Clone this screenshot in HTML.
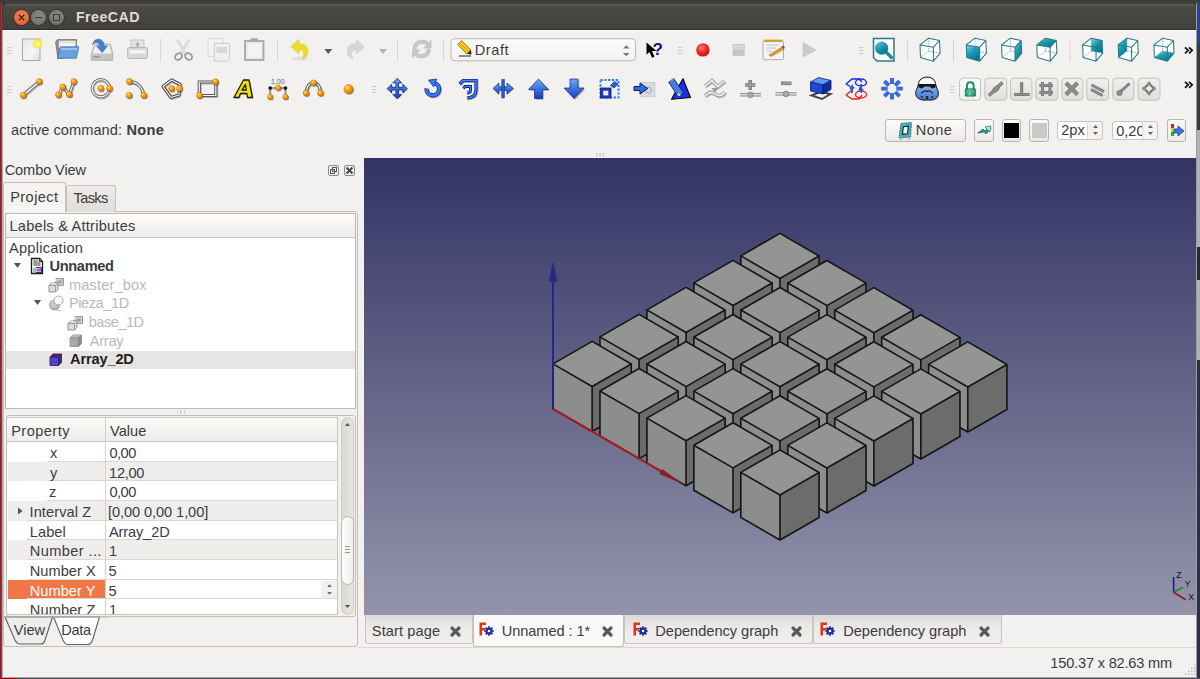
<!DOCTYPE html>
<html><head><meta charset="utf-8"><style>
*{box-sizing:border-box}
html,body{margin:0;padding:0;width:1200px;height:679px;overflow:hidden;background:#2f2e2b;font-family:"Liberation Sans",sans-serif;}
.a{position:absolute}
.t{position:absolute;white-space:nowrap;font-size:14px;color:#3c3c3c;line-height:1}
.sep{position:absolute;width:1px;background:#d6d3cf}
.grip{position:absolute;width:5px;height:8px;border-top:1px solid #c8c5c0;border-bottom:1px solid #c8c5c0}
.grip:after{content:"";position:absolute;left:0;top:3px;width:5px;height:1px;background:#c8c5c0}
.btn{position:absolute;border:1px solid #b9b5ae;border-radius:3px;background:linear-gradient(#fbfbfa,#ebe9e6)}
.sbtn{position:absolute;border:1px solid #c3bfb8;border-radius:4px;background:linear-gradient(#ecebe9,#dedcd8)}
</style></head>
<body>

<div class="a" style="left:0;top:0;width:1200px;height:4px;background:#3d3c38"></div>
<div class="a" style="left:0;top:3px;width:1px;height:676px;background:#6a2e45"></div>
<div class="a" style="left:1px;top:3px;width:1px;height:676px;background:#b03030"></div>
<div class="a" style="left:2px;top:3px;width:1px;height:27px;background:#3e3f3b"></div>
<div class="a" style="left:2px;top:30px;width:1px;height:648px;background:#b0afab"></div>
<div class="a" style="left:1196px;top:3px;width:1px;height:676px;background:#a09e9a"></div>
<div class="a" style="left:1197px;top:3px;width:3px;height:41px;background:#2a4590"></div>
<div class="a" style="left:1197px;top:44px;width:3px;height:86px;background:#3a3a3a"></div>
<div class="a" style="left:1197px;top:130px;width:3px;height:117px;background:#b0b0b0"></div>
<div class="a" style="left:1197px;top:247px;width:3px;height:33px;background:#2a2a2a"></div>
<div class="a" style="left:1197px;top:280px;width:3px;height:80px;background:#b0b0b0"></div>
<div class="a" style="left:1197px;top:360px;width:3px;height:319px;background:#2e2e4a"></div>
<div class="a" style="left:2px;top:677px;width:1194px;height:1px;background:#a8a6a2"></div>
<div class="a" style="left:2px;top:678px;width:1198px;height:1px;background:#4a4a58"></div>
<div class="a" style="left:1px;top:678px;width:16px;height:1px;background:#8a0a0a"></div>
<!-- title bar -->
<div class="a" style="left:3px;top:4px;width:1193px;height:26px;border-radius:4px 4px 0 0;background:linear-gradient(#5c5b56 0,#5c5b56 1px,#4b4a45 2px,#413f3b 100%)"></div>
<div class="a" style="left:3px;top:29px;width:1193px;height:1px;background:#2e2d2a"></div><div class="a" style="left:3px;top:30px;width:1193px;height:1px;background:#fbfbfa"></div>
<div class="a" style="left:14px;top:10px;width:15px;height:15px;border-radius:50%;background:radial-gradient(circle at 50% 35%,#f5825b,#e2571f);box-shadow:0 0 0 1px rgba(0,0,0,0.22)"></div>
<div class="a" style="left:31px;top:10px;width:15px;height:15px;border-radius:50%;background:radial-gradient(circle at 50% 35%,#8a8984,#6b6a65);box-shadow:0 0 0 1px rgba(0,0,0,0.22)"></div>
<div class="a" style="left:49px;top:10px;width:15px;height:15px;border-radius:50%;background:radial-gradient(circle at 50% 35%,#8a8984,#6b6a65);box-shadow:0 0 0 1px rgba(0,0,0,0.22)"></div>
<svg class="a" style="left:14px;top:10px" width="15" height="15"><path d="M4.8 4.8L10.2 10.2M10.2 4.8L4.8 10.2" stroke="#3c2418" stroke-width="1.3"/></svg>
<div class="a" style="left:35.2px;top:16.8px;width:6.6px;height:1.5px;background:#3a3935"></div>
<div class="a" style="left:53.3px;top:14.3px;width:6.5px;height:6.5px;border:1.2px solid #3a3935"></div>
<!-- window body -->
<div class="a" style="left:3px;top:31px;width:1193px;height:646px;background:#f2f1f0"></div>

<div class="t" style="left:76.00px;top:10.28px;font-size:14.2px;font-weight:700;color:#dfdbd2;letter-spacing:0.458px;">FreeCAD</div>
<svg class="a" style="left:0;top:0" width="1200" height="110" viewBox="0 0 1200 110"><defs>
<radialGradient id="gor" cx="0.35" cy="0.3" r="0.7"><stop offset="0" stop-color="#ffe08a"/><stop offset="0.45" stop-color="#fba40f"/><stop offset="1" stop-color="#e07800"/></radialGradient>
<linearGradient id="gteal" x1="0" y1="0" x2="0.6" y2="1"><stop offset="0" stop-color="#7fd3ee"/><stop offset="0.5" stop-color="#1e9ab4"/><stop offset="1" stop-color="#00798c"/></linearGradient>
<linearGradient id="gblue" x1="0" y1="0" x2="0" y2="1"><stop offset="0" stop-color="#6aa8f4"/><stop offset="1" stop-color="#1340c0"/></linearGradient>
<linearGradient id="gbtn" x1="0" y1="0" x2="0" y2="1"><stop offset="0" stop-color="#f1f0ee"/><stop offset="1" stop-color="#e0deda"/></linearGradient>
<linearGradient id="gbtnl" x1="0" y1="0" x2="0" y2="1"><stop offset="0" stop-color="#fdfdfd"/><stop offset="1" stop-color="#f2f1f0"/></linearGradient>
<linearGradient id="gpage" x1="0" y1="0" x2="1" y2="1"><stop offset="0" stop-color="#e6e6e6"/><stop offset="0.6" stop-color="#f6f6f6"/><stop offset="1" stop-color="#dcdcdc"/></linearGradient>
<radialGradient id="gred" cx="0.4" cy="0.35" r="0.7"><stop offset="0" stop-color="#ff7a7a"/><stop offset="0.5" stop-color="#ee2a2a"/><stop offset="1" stop-color="#c81010"/></radialGradient>
<radialGradient id="gglow" cx="0.5" cy="0.5" r="0.5"><stop offset="0" stop-color="#ffffd0"/><stop offset="0.5" stop-color="#f8f020"/><stop offset="1" stop-color="#f0e040" stop-opacity="0"/></radialGradient>
<linearGradient id="ggreen" x1="0" y1="0" x2="1" y2="0"><stop offset="0" stop-color="#0e7a5a"/><stop offset="0.4" stop-color="#5ac8a0"/><stop offset="1" stop-color="#0e7a5a"/></linearGradient>
</defs><path d="M7 47.5H11.5M7 50.5H11.5M7 53.5H11.5" stroke="#cfccc7" stroke-width="1"/><rect x="22.5" y="39" width="17.5" height="21.5" fill="url(#gpage)" stroke="#a8a8a8" stroke-width="1"/><circle cx="37.7" cy="43.9" r="6" fill="url(#gglow)"/><path d="M55.5 42L57.5 39.5H76.5V56.5L58 58.5Z" fill="#8e8e8e" stroke="#6a6a6a" stroke-width="0.7"/><path d="M59 40.8H75.5V48H59Z" fill="#f6f6f6" stroke="#bbb" stroke-width="0.5"/><path d="M60 42.5H74.5" stroke="#d0d0d0" stroke-width="0.8"/><path d="M60.5 46.8H78.8L76.3 58.2H57.3Z" fill="#6aa2e0" stroke="#3d70b5" stroke-width="0.8"/><path d="M61.5 48H77.3L76.8 50H60.5Z" fill="#9cc4f0"/><path d="M95 44H110.3L112.7 53.7V60.3H91.3V53.7Z" fill="#c6c6c6" stroke="#a4a4a4" stroke-width="0.8"/><path d="M95.6 44.8H109.7L111.6 53.5H92.4Z" fill="#f0f0f0"/><rect x="93.5" y="56" width="6" height="1.8" fill="#9a9a9a"/><path d="M92.3 45Q93.5 39 98.5 39Q103.5 39.5 104.5 45.7H107.8L102.2 52.7L96.2 45.7H99.5Q99 42.5 96.5 42.5Q94 42.5 92.3 45Z" fill="#4a7fc8" stroke="#3a6ab0" stroke-width="0.4"/><rect x="131" y="40" width="13" height="8" fill="#e4e4e4" stroke="#bdbdbd" stroke-width="0.8"/><path d="M137.5 42L135 45H140Z M136.6 45h1.8v2h-1.8z" fill="#a8a8a8"/><rect x="127.5" y="47.5" width="20" height="11" rx="2" fill="#d6d6d6" stroke="#b0b0b0" stroke-width="0.8"/><rect x="129.5" y="50" width="16" height="3.5" fill="#f4f4f4"/><line x1="160.5" y1="38.5" x2="160.5" y2="61.5" stroke="#d9d6d1" stroke-width="1"/><path d="M177 39.5L185 53M189.5 39.5L181 53" stroke="#c8c8c8" stroke-width="2.2"/><path d="M177 39.5L185 53M189.5 39.5L181 53" stroke="#e8e8e8" stroke-width="1"/><ellipse cx="178.6" cy="56.5" rx="3.8" ry="3" fill="none" stroke="#9a9a9a" stroke-width="1.7" transform="rotate(-35 178.6 56.5)"/><ellipse cx="188.6" cy="56.5" rx="3.8" ry="3" fill="none" stroke="#9a9a9a" stroke-width="1.7" transform="rotate(35 188.6 56.5)"/><rect x="208" y="38.7" width="15" height="17.5" fill="#f3f3f3" stroke="#cfcfcf" stroke-width="0.8"/><path d="M214.3 43.3H229.6V58.5L227 61.2H214.3Z" fill="#f0f0f0" stroke="#c4c4c4" stroke-width="0.8"/><rect x="216.5" y="47" width="10.5" height="6" fill="#d8d8d8"/><rect x="245" y="41" width="18.5" height="19" fill="#ececec" stroke="#a6a6a6" stroke-width="1.8"/><rect x="250.5" y="38.3" width="7.5" height="3.5" rx="1" fill="#a8a8a8"/><rect x="248" y="44" width="12.5" height="13" fill="#f4f4f4"/><line x1="277.5" y1="38.5" x2="277.5" y2="61.5" stroke="#d9d6d1" stroke-width="1"/><ellipse cx="300" cy="58.5" rx="8" ry="2" fill="#000" opacity="0.08"/><path d="M291 46.7L299 39.3V43.5Q308.5 44 308 52Q307.5 57 302.5 58.8Q304.5 55 303.5 52Q302 49.5 299 50V54Z" fill="#ecdc30" stroke="#d8c420" stroke-width="0.6"/><path d="M324.3 49L332.3 49L328.3 54Z" fill="#5a5a5a"/><path d="M364.3 46.7L356.3 39.3V43.5Q346.8 44 347.3 52Q347.8 57 352.8 58.8Q350.8 55 351.8 52Q353.3 49.5 356.3 50V54Z" fill="#d6d6d6" stroke="#c8c8c8" stroke-width="0.6"/><path d="M379 49L387 49L383 54Z" fill="#b0b0b0"/><line x1="397.5" y1="38.5" x2="397.5" y2="61.5" stroke="#d9d6d1" stroke-width="1"/><path d="M413 49Q413 40.5 422 40Q427 40 429.5 43L431 40V48H423.5L426.5 45.5Q425 43.5 422 43.6Q416.5 44 416.5 49Z" fill="#c8c8c8" stroke="#b8b8b8" stroke-width="0.6"/><path d="M430.5 49Q430.5 57.5 421.5 58Q416.5 58 414 55L412.5 58V50H420L417 52.5Q418.5 54.5 421.5 54.4Q427 54 427 49Z" fill="#c8c8c8" stroke="#b8b8b8" stroke-width="0.6"/><line x1="443.5" y1="38.5" x2="443.5" y2="61.5" stroke="#d9d6d1" stroke-width="1"/><rect x="451" y="38.8" width="184.5" height="22" rx="3.5" fill="url(#gbtnl)" stroke="#bcb8b1" stroke-width="1"/><path d="M457.5 44.5L461.5 40.5L471 50L467 54Z" fill="#f2c81a" stroke="#9a6a00" stroke-width="0.8"/><path d="M459.5 42.5L469 52" stroke="#d89a10" stroke-width="1"/><path d="M467 54L471 50L471.5 54.5Z" fill="#222"/><path d="M459 56H471" stroke="#222" stroke-width="1"/><path d="M623 48.5L626.3 45.3L629.6 48.5Z M623 53L626.3 56.3L629.6 53Z" fill="#777"/><path d="M646.5 42.5V54.5L649.5 52L652 57.8L654.5 56.8L652 51H656.5Z" fill="#000"/><text x="652.6" y="55" font-family="Liberation Sans" font-weight="bold" font-size="17" fill="#10108a">?</text><path d="M678 47.5H682.5M678 50.5H682.5M678 53.5H682.5" stroke="#cfccc7" stroke-width="1"/><circle cx="702.9" cy="49.9" r="6.7" fill="url(#gred)"/><rect x="733" y="44.3" width="11.2" height="11.1" fill="#c4c4c4" stroke="#bbb" stroke-width="0.6"/><rect x="733.5" y="44.8" width="10.2" height="5" fill="#d8d8d8"/><rect x="763" y="41" width="20.5" height="18.7" rx="1" fill="#f4f4f4" stroke="#9a9a9a" stroke-width="0.8"/><rect x="764" y="39.6" width="18.5" height="2.4" fill="#c8a040"/><path d="M766 45H779M766 48H776M766 51H772" stroke="#b8b8b8" stroke-width="0.8"/><path d="M769 55L782 47L784 49L771 56.5Z" fill="#e0a030" stroke="#8a5a10" stroke-width="0.5"/><path d="M781.5 46.5L783.5 45.5L785 48L783.5 49Z" fill="#d83030"/><path d="M803 42.7L816 50L803 57Z" fill="#cacaca" stroke="#bdbdbd" stroke-width="0.6"/><path d="M859 47.5H863.5M859 50.5H863.5M859 53.5H863.5" stroke="#cfccc7" stroke-width="1"/><path d="M873.5 38.5H894V61H877L873.5 57.5Z" fill="#fff" stroke="#2a7a84" stroke-width="1.5"/><path d="M886.5 52.5L891.5 57.5" stroke="#1c8a9a" stroke-width="3.2" stroke-linecap="round"/><circle cx="881.7" cy="48.2" r="6.2" fill="url(#gteal)" stroke="#1a6a78" stroke-width="0.6"/><line x1="907.5" y1="38.5" x2="907.5" y2="61.5" stroke="#d9d6d1" stroke-width="1"/><polygon points="920.0,44.9 928.7,38.2 939.5,40.5 940.1,53.1 933.4,61.2 920.5,57.5" fill="#fff"/><path d="M928.7,38.2 928.7,51.0M928.7,51.0 920.5,57.5M928.7,51.0 940.1,53.1" stroke="#3a8a96" stroke-width="0.7" stroke-dasharray="1.4,1.1" fill="none"/><path d="M920.0,44.9 928.7,38.2 939.5,40.5 933.4,47.2Z M920.0,44.9 920.5,57.5 933.4,61.2 940.1,53.1 939.5,40.5 M933.4,47.2 933.4,61.2" stroke="#2a7884" stroke-width="1.05" fill="none" stroke-linejoin="round"/><line x1="953.5" y1="38.5" x2="953.5" y2="61.5" stroke="#d9d6d1" stroke-width="1"/><polygon points="966.3,44.9 975.0,38.2 985.8,40.5 986.4,53.1 979.7,61.2 966.8,57.5" fill="#fff"/><polygon points="966.3,44.9 979.7,47.2 979.7,61.2 966.8,57.5" fill="url(#gteal)"/><path d="M975.0,38.2 975.0,51.0M975.0,51.0 966.8,57.5M975.0,51.0 986.4,53.1" stroke="#3a8a96" stroke-width="0.7" stroke-dasharray="1.4,1.1" fill="none"/><path d="M966.3,44.9 975.0,38.2 985.8,40.5 979.7,47.2Z M966.3,44.9 966.8,57.5 979.7,61.2 986.4,53.1 985.8,40.5 M979.7,47.2 979.7,61.2" stroke="#2a7884" stroke-width="1.05" fill="none" stroke-linejoin="round"/><polygon points="1001.6,44.9 1010.3,38.2 1021.1,40.5 1021.7,53.1 1015.0,61.2 1002.1,57.5" fill="#fff"/><polygon points="1015.0,47.2 1021.1,40.5 1021.7,53.1 1015.0,61.2" fill="url(#gteal)"/><path d="M1010.3,38.2 1010.3,51.0M1010.3,51.0 1002.1,57.5M1010.3,51.0 1021.7,53.1" stroke="#3a8a96" stroke-width="0.7" stroke-dasharray="1.4,1.1" fill="none"/><path d="M1001.6,44.9 1010.3,38.2 1021.1,40.5 1015.0,47.2Z M1001.6,44.9 1002.1,57.5 1015.0,61.2 1021.7,53.1 1021.1,40.5 M1015.0,47.2 1015.0,61.2" stroke="#2a7884" stroke-width="1.05" fill="none" stroke-linejoin="round"/><polygon points="1036.8,44.9 1045.5,38.2 1056.3,40.5 1056.9,53.1 1050.2,61.2 1037.3,57.5" fill="#fff"/><polygon points="1036.8,44.9 1045.5,38.2 1056.3,40.5 1050.2,47.2" fill="url(#gteal)"/><path d="M1045.5,38.2 1045.5,51.0M1045.5,51.0 1037.3,57.5M1045.5,51.0 1056.9,53.1" stroke="#3a8a96" stroke-width="0.7" stroke-dasharray="1.4,1.1" fill="none"/><path d="M1036.8,44.9 1045.5,38.2 1056.3,40.5 1050.2,47.2Z M1036.8,44.9 1037.3,57.5 1050.2,61.2 1056.9,53.1 1056.3,40.5 M1050.2,47.2 1050.2,61.2" stroke="#2a7884" stroke-width="1.05" fill="none" stroke-linejoin="round"/><line x1="1070" y1="38.5" x2="1070" y2="61.5" stroke="#d9d6d1" stroke-width="1"/><polygon points="1082.6,44.9 1091.3,38.2 1102.1,40.5 1102.7,53.1 1096.0,61.2 1083.1,57.5" fill="#fff"/><polygon points="1091.3,38.2 1102.1,40.5 1102.7,53.1 1091.3,51.0" fill="url(#gteal)"/><path d="M1091.3,38.2 1091.3,51.0M1091.3,51.0 1083.1,57.5M1091.3,51.0 1102.7,53.1" stroke="#3a8a96" stroke-width="0.7" stroke-dasharray="1.4,1.1" fill="none"/><path d="M1082.6,44.9 1091.3,38.2 1102.1,40.5 1096.0,47.2Z M1082.6,44.9 1083.1,57.5 1096.0,61.2 1102.7,53.1 1102.1,40.5 M1096.0,47.2 1096.0,61.2" stroke="#2a7884" stroke-width="1.05" fill="none" stroke-linejoin="round"/><polygon points="1118.2,44.9 1126.9,38.2 1137.7,40.5 1138.3,53.1 1131.6,61.2 1118.7,57.5" fill="#fff"/><polygon points="1118.2,44.9 1126.9,38.2 1126.9,51.0 1118.7,57.5" fill="url(#gteal)"/><path d="M1126.9,38.2 1126.9,51.0M1126.9,51.0 1118.7,57.5M1126.9,51.0 1138.3,53.1" stroke="#3a8a96" stroke-width="0.7" stroke-dasharray="1.4,1.1" fill="none"/><path d="M1118.2,44.9 1126.9,38.2 1137.7,40.5 1131.6,47.2Z M1118.2,44.9 1118.7,57.5 1131.6,61.2 1138.3,53.1 1137.7,40.5 M1131.6,47.2 1131.6,61.2" stroke="#2a7884" stroke-width="1.05" fill="none" stroke-linejoin="round"/><polygon points="1153.9,44.9 1162.6,38.2 1173.4,40.5 1174.0,53.1 1167.3,61.2 1154.4,57.5" fill="#fff"/><polygon points="1154.4,57.5 1162.6,51.0 1174.0,53.1 1167.3,61.2" fill="url(#gteal)"/><path d="M1162.6,38.2 1162.6,51.0M1162.6,51.0 1154.4,57.5M1162.6,51.0 1174.0,53.1" stroke="#3a8a96" stroke-width="0.7" stroke-dasharray="1.4,1.1" fill="none"/><path d="M1153.9,44.9 1162.6,38.2 1173.4,40.5 1167.3,47.2Z M1153.9,44.9 1154.4,57.5 1167.3,61.2 1174.0,53.1 1173.4,40.5 M1167.3,47.2 1167.3,61.2" stroke="#2a7884" stroke-width="1.05" fill="none" stroke-linejoin="round"/><path d="M1185 47.3L1188.2 50.3L1185 53.3M1189 47.3L1192.2 50.3L1189 53.3" fill="none" stroke="#111" stroke-width="1.7"/><path d="M7 86.5H11.5M7 89.5H11.5M7 92.5H11.5" stroke="#cfccc7" stroke-width="1"/><path d="M23.2 95.3L39.3 81.6" fill="none" stroke="#222" stroke-opacity="0.28" stroke-width="3.8" transform="translate(0.9,1)" /><path d="M23.2 95.3L39.3 81.6" fill="none" stroke="#707070" stroke-width="3.8" /><path d="M23.2 95.3L39.3 81.6" fill="none" stroke="#f6f6f6" stroke-width="1.6" /><circle cx="24.0" cy="96.2" r="3.0" fill="#333" opacity="0.55"/><circle cx="23.2" cy="95.3" r="3.0" fill="url(#gor)" stroke="#c07000" stroke-width="0.5"/><circle cx="40.099999999999994" cy="82.5" r="3.0" fill="#333" opacity="0.55"/><circle cx="39.3" cy="81.6" r="3.0" fill="url(#gor)" stroke="#c07000" stroke-width="0.5"/><path d="M58.4 94.75L62.8 86.9L69.3 94.4L73.9 81.6" fill="none" stroke="#222" stroke-opacity="0.28" stroke-width="3.2" transform="translate(0.9,1)" /><path d="M58.4 94.75L62.8 86.9L69.3 94.4L73.9 81.6" fill="none" stroke="#707070" stroke-width="3.2" /><path d="M58.4 94.75L62.8 86.9L69.3 94.4L73.9 81.6" fill="none" stroke="#f6f6f6" stroke-width="1.2" /><circle cx="59.199999999999996" cy="95.65" r="3.0" fill="#333" opacity="0.55"/><circle cx="58.4" cy="94.75" r="3.0" fill="url(#gor)" stroke="#c07000" stroke-width="0.5"/><circle cx="63.599999999999994" cy="87.80000000000001" r="3.0" fill="#333" opacity="0.55"/><circle cx="62.8" cy="86.9" r="3.0" fill="url(#gor)" stroke="#c07000" stroke-width="0.5"/><circle cx="70.1" cy="95.30000000000001" r="3.0" fill="#333" opacity="0.55"/><circle cx="69.3" cy="94.4" r="3.0" fill="url(#gor)" stroke="#c07000" stroke-width="0.5"/><circle cx="74.7" cy="82.5" r="3.0" fill="#333" opacity="0.55"/><circle cx="73.9" cy="81.6" r="3.0" fill="url(#gor)" stroke="#c07000" stroke-width="0.5"/><path d="M92.2 88.3A8.6 8.6 0 1 0 109.4 88.3A8.6 8.6 0 1 0 92.2 88.3Z" fill="none" stroke="#222" stroke-opacity="0.28" stroke-width="3.2" transform="translate(0.9,1)" /><path d="M92.2 88.3A8.6 8.6 0 1 0 109.4 88.3A8.6 8.6 0 1 0 92.2 88.3Z" fill="none" stroke="#707070" stroke-width="3.2" /><path d="M92.2 88.3A8.6 8.6 0 1 0 109.4 88.3A8.6 8.6 0 1 0 92.2 88.3Z" fill="none" stroke="#f6f6f6" stroke-width="1.3" /><circle cx="101.6" cy="89.2" r="3.0" fill="#333" opacity="0.55"/><circle cx="100.8" cy="88.3" r="3.0" fill="url(#gor)" stroke="#c07000" stroke-width="0.5"/><circle cx="110.39999999999999" cy="89.2" r="3.0" fill="#333" opacity="0.55"/><circle cx="109.6" cy="88.3" r="3.0" fill="url(#gor)" stroke="#c07000" stroke-width="0.5"/><path d="M129.4 81.6Q141 82 143.9 95.3" fill="none" stroke="#222" stroke-opacity="0.28" stroke-width="3.2" transform="translate(0.9,1)" /><path d="M129.4 81.6Q141 82 143.9 95.3" fill="none" stroke="#707070" stroke-width="3.2" /><path d="M129.4 81.6Q141 82 143.9 95.3" fill="none" stroke="#f6f6f6" stroke-width="1.2" /><circle cx="130.20000000000002" cy="82.5" r="3.0" fill="#333" opacity="0.55"/><circle cx="129.4" cy="81.6" r="3.0" fill="url(#gor)" stroke="#c07000" stroke-width="0.5"/><circle cx="129.9" cy="96.2" r="3.0" fill="#333" opacity="0.55"/><circle cx="129.1" cy="95.3" r="3.0" fill="url(#gor)" stroke="#c07000" stroke-width="0.5"/><circle cx="144.70000000000002" cy="96.2" r="3.0" fill="#333" opacity="0.55"/><circle cx="143.9" cy="95.3" r="3.0" fill="url(#gor)" stroke="#c07000" stroke-width="0.5"/><path d="M163 86.5L171.5 80L180 84.5L179 95L171 97.5Z" fill="none" stroke="#222" stroke-opacity="0.28" stroke-width="3.2" transform="translate(0.9,1)" stroke-linejoin="round"/><path d="M163 86.5L171.5 80L180 84.5L179 95L171 97.5Z" fill="none" stroke="#4a4a4a" stroke-width="3.2" stroke-linejoin="round"/><path d="M163 86.5L171.5 80L180 84.5L179 95L171 97.5Z" fill="none" stroke="#f6f6f6" stroke-width="1.2" stroke-linejoin="round"/><circle cx="172.4" cy="89.5" r="3.0" fill="#333" opacity="0.55"/><circle cx="171.6" cy="88.6" r="3.0" fill="url(#gor)" stroke="#c07000" stroke-width="0.5"/><circle cx="180.3" cy="89.5" r="3.0" fill="#333" opacity="0.55"/><circle cx="179.5" cy="88.6" r="3.0" fill="url(#gor)" stroke="#c07000" stroke-width="0.5"/><path d="M199.3 82H215.8V95.5H199.3Z" fill="none" stroke="#222" stroke-opacity="0.28" stroke-width="3.2" transform="translate(0.9,1)" /><path d="M199.3 82H215.8V95.5H199.3Z" fill="none" stroke="#5a5a5a" stroke-width="3.2" /><path d="M199.3 82H215.8V95.5H199.3Z" fill="none" stroke="#f6f6f6" stroke-width="1.2" /><circle cx="216.4" cy="82.7" r="3.0" fill="#333" opacity="0.55"/><circle cx="215.6" cy="81.8" r="3.0" fill="url(#gor)" stroke="#c07000" stroke-width="0.5"/><circle cx="200.3" cy="96.4" r="3.0" fill="#333" opacity="0.55"/><circle cx="199.5" cy="95.5" r="3.0" fill="url(#gor)" stroke="#c07000" stroke-width="0.5"/><path d="M234 97.5L243.5 80H249L252.5 97.5H247.5L246.8 93.5H240.5L238.8 97.5Z M242 90H246.3L245.4 84.5Z" fill="#333" fill-rule="evenodd" opacity="0.4" transform="translate(1,1)"/><path d="M234 97.5L243.5 80H249L252.5 97.5H247.5L246.8 93.5H240.5L238.8 97.5Z M242 90H246.3L245.4 84.5Z" fill="#f8e000" fill-rule="evenodd" stroke="#1a1a1a" stroke-width="1.3" stroke-linejoin="round"/><text x="271" y="84.3" font-family="Liberation Sans" font-size="7" fill="#bbb" stroke="#888" stroke-width="0.3">1.00</text><path d="M270.2 88.1H285.5M270.2 88.1V96.9M285.5 88.1V96.9" stroke="#999" stroke-width="2.2"/><circle cx="270.2" cy="88.1" r="1.8" fill="#111"/><circle cx="285.5" cy="88.1" r="1.8" fill="#111"/><circle cx="271.0" cy="97.80000000000001" r="2.7" fill="#333" opacity="0.55"/><circle cx="270.2" cy="96.9" r="2.7" fill="url(#gor)" stroke="#c07000" stroke-width="0.5"/><circle cx="286.3" cy="97.80000000000001" r="2.7" fill="#333" opacity="0.55"/><circle cx="285.5" cy="96.9" r="2.7" fill="url(#gor)" stroke="#c07000" stroke-width="0.5"/><circle cx="278.90000000000003" cy="88.7" r="2.7" fill="#333" opacity="0.55"/><circle cx="278.1" cy="87.8" r="2.7" fill="url(#gor)" stroke="#c07000" stroke-width="0.5"/><path d="M306.1 93Q307 82.9 313.5 82.9Q320 82.9 320.5 93" fill="none" stroke="#222" stroke-opacity="0.28" stroke-width="3.2" transform="translate(0.9,1)" /><path d="M306.1 93Q307 82.9 313.5 82.9Q320 82.9 320.5 93" fill="none" stroke="#5a5a5a" stroke-width="3.2" /><path d="M306.1 93Q307 82.9 313.5 82.9Q320 82.9 320.5 93" fill="none" stroke="#f6f6f6" stroke-width="1.2" /><circle cx="306.90000000000003" cy="93.9" r="3.0" fill="#333" opacity="0.55"/><circle cx="306.1" cy="93" r="3.0" fill="url(#gor)" stroke="#c07000" stroke-width="0.5"/><circle cx="314.3" cy="83.80000000000001" r="3.0" fill="#333" opacity="0.55"/><circle cx="313.5" cy="82.9" r="3.0" fill="url(#gor)" stroke="#c07000" stroke-width="0.5"/><circle cx="321.3" cy="93.9" r="3.0" fill="#333" opacity="0.55"/><circle cx="320.5" cy="93" r="3.0" fill="url(#gor)" stroke="#c07000" stroke-width="0.5"/><circle cx="349.3" cy="90.10000000000001" r="4.6" fill="#333" opacity="0.55"/><circle cx="348.5" cy="89.2" r="4.6" fill="url(#gor)" stroke="#c07000" stroke-width="0.5"/><path d="M372 86.5H376.5M372 89.5H376.5M372 92.5H376.5" stroke="#cfccc7" stroke-width="1"/><path d="M397.2 78.4L401.6 82.8H398.5V87.3H402.8V84.2L407.2 88.6L402.8 93V89.9H398.5V94.4H401.6L397.2 98.8L392.8 94.4H395.9V89.9H391.6V93L387.2 88.6L391.6 84.2V87.3H395.9V82.8H392.8Z" fill="#222" opacity="0.3" transform="translate(0.8,0.8)"/><path d="M397.2 78.4L401.6 82.8H398.5V87.3H402.8V84.2L407.2 88.6L402.8 93V89.9H398.5V94.4H401.6L397.2 98.8L392.8 94.4H395.9V89.9H391.6V93L387.2 88.6L391.6 84.2V87.3H395.9V82.8H392.8Z" fill="url(#gblue)" stroke="#0a2a80" stroke-width="0.8" stroke-linejoin="round"/><path d="M426.5 88.5A6.3 6.3 0 1 0 434.5 83" fill="none" stroke="#111" stroke-width="4" opacity="0.35" transform="translate(0.9,0.9)"/><path d="M426.5 88.5A6.3 6.3 0 1 0 434.5 83" fill="none" stroke="#0a2a90" stroke-width="4.4"/><path d="M426.5 88.5A6.3 6.3 0 1 0 434.5 83" fill="none" stroke="#3a7af0" stroke-width="2.8"/><path d="M428.5 80.1L436.8 79.1L433.7 86.9Z" fill="#3a7af0" stroke="#0a2a90" stroke-width="0.7"/><path d="M459.5 84L463 80.5H476V90Q476 97.5 467 98" fill="none" stroke="#111" stroke-width="3.4" opacity="0.3" transform="translate(0.8,0.8)"/><path d="M459.5 84L463 80.5H476V90Q476 97.5 467 98" fill="none" stroke="#0a20a0" stroke-width="3.2"/><path d="M459.5 84L463 80.5H476V90Q476 97.5 467 98" fill="none" stroke="#4a8af0" stroke-width="1.4"/><path d="M463.5 88.5L465 86.5H470.5V90.5Q470.5 93 467 93" fill="none" stroke="#0a20a0" stroke-width="3"/><path d="M463.5 88.5L465 86.5H470.5V90.5Q470.5 93 467 93" fill="none" stroke="#4a8af0" stroke-width="1.2"/><path d="M493 88.6L499 83V86.8H507V83L513.5 88.6L507 94.2V90.4H499V94.2Z" fill="url(#gblue)" stroke="#0a2a80" stroke-width="0.7"/><rect x="501.8" y="79.5" width="2.6" height="18.5" fill="#2a5ad8" stroke="#0a2a80" stroke-width="0.5"/><path d="M538.5 79L548.5 89.5H542.5V98.5H534.5V89.5H528.5Z" fill="#222" opacity="0.35" transform="translate(1.2,1.2)"/><path d="M538.5 79L548.5 89.5H542.5V98.5H534.5V89.5H528.5Z" fill="url(#gblue)" stroke="#0a2a90" stroke-width="0.7"/><path d="M574 98.5L584 88H578V79H570V88H564Z" fill="#222" opacity="0.35" transform="translate(1.2,1.2)"/><path d="M574 98.5L584 88H578V79H570V88H564Z" fill="url(#gblue)" stroke="#0a2a90" stroke-width="0.7"/><rect x="600.5" y="80" width="18" height="17.5" fill="none" stroke="#2a78f8" stroke-width="2" stroke-dasharray="2.2,1.6"/><rect x="600.5" y="88" width="10.5" height="10" fill="#1a3ac0" stroke="#0a1a70" stroke-width="0.8"/><rect x="603.3" y="90.8" width="5" height="4.6" fill="#f2f1f0"/><path d="M610.5 85.5L614.5 81.5L618 84L614 88Z" fill="#2a60d8" stroke="#0a2a80" stroke-width="0.7"/><rect x="641" y="82.5" width="13.8" height="14" fill="#dcdcdc" stroke="#c4c4c4" stroke-width="0.8"/><circle cx="648.5" cy="90" r="3" fill="none" stroke="#8a9ae8" stroke-width="0.9"/><path d="M634 86.5H640V83L647.8 88.5L640 94V90.5H634Z" fill="#2a70e0" stroke="#0a1a60" stroke-width="1"/><path d="M683 78.8L690.5 97.5L671.5 99.2Z" fill="#1a30e8" stroke="#000" stroke-width="1.1" stroke-linejoin="round"/><path d="M668.8 82.2L673.6 78.6L683.5 92.5L680.5 96.5L677 95Z" fill="#4a7ae0" stroke="#0a1a60" stroke-width="0.9"/><path d="M670.5 81L675 78" stroke="#9ab8f0" stroke-width="0.8"/><path d="M677 95L680.5 96.5L679 93Z" fill="#f0f0f0"/><path d="M705 86L712 80.5L717.5 86.5L724.5 81" fill="none" stroke="#222" stroke-opacity="0.28" stroke-width="3.4" transform="translate(0.9,1)" /><path d="M705 86L712 80.5L717.5 86.5L724.5 81" fill="none" stroke="#a0a0a0" stroke-width="3.4" /><path d="M705 86L712 80.5L717.5 86.5L724.5 81" fill="none" stroke="#f6f6f6" stroke-width="1.4" /><path d="M705 96Q710 90 715 94Q720 98 725 92" fill="none" stroke="#222" stroke-opacity="0.28" stroke-width="3.4" transform="translate(0.9,1)" /><path d="M705 96Q710 90 715 94Q720 98 725 92" fill="none" stroke="#a0a0a0" stroke-width="3.4" /><path d="M705 96Q710 90 715 94Q720 98 725 92" fill="none" stroke="#f6f6f6" stroke-width="1.4" /><path d="M711.5 88L718.5 88L715 92.5Z" fill="#9a9a9a"/><path d="M750.2 80V90M745.2 85H755.2" stroke="#777" stroke-width="3.6"/><path d="M750.2 80.6V89.4M745.8 85H754.6" stroke="#9c9c9c" stroke-width="2.2"/><path d="M740 94.8H761" fill="none" stroke="#8a8a8a" stroke-width="3.4" /><path d="M740 94.8H761" fill="none" stroke="#f6f6f6" stroke-width="1.2" /><circle cx="750.5" cy="94.8" r="2.8" fill="#a8a8a8" stroke="#777" stroke-width="0.7"/><path d="M781 83.3H791.5" stroke="#777" stroke-width="3.6"/><path d="M781.6 83.3H790.9" stroke="#9c9c9c" stroke-width="2.2"/><path d="M775.5 93.9H796.5" fill="none" stroke="#8a8a8a" stroke-width="3.4" /><path d="M775.5 93.9H796.5" fill="none" stroke="#f6f6f6" stroke-width="1.2" /><circle cx="786" cy="93.9" r="2.8" fill="#a8a8a8" stroke="#777" stroke-width="0.7"/><path d="M811.5 95.5L820 92L830.5 94L822 99Z" fill="none" stroke="#444" stroke-width="2"/><path d="M810.5 82L818.5 77.5L831 80.5L823 85Z" fill="#5a9af4" stroke="#0a1a70" stroke-width="0.8"/><path d="M810.5 82L823 85V94L810.5 91Z" fill="#1a4ad8" stroke="#0a1a70" stroke-width="0.8"/><path d="M823 85L831 80.5V89.5L823 94Z" fill="#0e2aa0" stroke="#0a1a70" stroke-width="0.8"/><path d="M846 84L852 79H859L862 82" fill="none" stroke="#1a2af0" stroke-width="1.4"/><ellipse cx="861" cy="82.5" rx="5.5" ry="3.5" fill="none" stroke="#1a2af0" stroke-width="1.4"/><path d="M846 84L850.5 86.5" stroke="#1a2af0" stroke-width="1.4"/><path d="M846 95L852 99H859L862 95" fill="none" stroke="#f02020" stroke-width="1.4"/><ellipse cx="861" cy="94.5" rx="5.5" ry="3.5" fill="none" stroke="#f02020" stroke-width="1.4"/><path d="M846 95L851 91" stroke="#f02020" stroke-width="1.4"/><path d="M852 93V86.5L850 88.5M852 86.5L854 88.5" stroke="#2a60d8" stroke-width="2"/><path d="M861 84V91L859 89M861 91L863 89" stroke="#2a60d8" stroke-width="2"/><path d="M896.6 88.7L902.6 88.7M895.3 92.0L899.5 96.2M892.0 93.3L892.0 99.3M888.7 92.0L884.5 96.2M887.4 88.7L881.4 88.7M888.7 85.4L884.5 81.2M892.0 84.1L892.0 78.1M895.3 85.4L899.5 81.2" stroke="#0a2a90" stroke-width="3.8" stroke-linecap="butt" opacity="0.8"/><path d="M896.6 88.7L902.6 88.7M895.3 92.0L899.5 96.2M892.0 93.3L892.0 99.3M888.7 92.0L884.5 96.2M887.4 88.7L881.4 88.7M888.7 85.4L884.5 81.2M892.0 84.1L892.0 78.1M895.3 85.4L899.5 81.2" stroke="#2f6ef0" stroke-width="2.8"/><defs><linearGradient id="gst" x1="0" y1="0" x2="0" y2="1"><stop offset="0" stop-color="#b4d0f4"/><stop offset="1" stop-color="#3f78d6"/></linearGradient></defs><path d="M927 77Q934.5 77.3 935.5 83.5L936.3 87Q938.8 91 938.3 94.5Q937.5 98.8 932 99.8Q929.5 100.3 927 99.8Q924.5 100.3 922 99.8Q916.5 98.8 915.7 94.5Q915.2 91 917.7 87L918.5 83.5Q919.5 77.3 927 77Z" fill="#000" opacity="0.3" transform="translate(0.7,0.9)"/><path d="M927 77Q934.5 77.3 935.5 83.5L936.3 87Q938.8 91 938.3 94.5Q937.5 98.8 932 99.8Q929.5 100.3 927 99.8Q924.5 100.3 922 99.8Q916.5 98.8 915.7 94.5Q915.2 91 917.7 87L918.5 83.5Q919.5 77.3 927 77Z" fill="url(#gst)" stroke="#222" stroke-width="1"/><path d="M919 84.2Q919.8 78 927 77.9Q934.2 78 935 84.2Z" fill="#fafafa"/><path d="M918.2 84H935.8L935.6 87.2L932.5 88.6L929 86.6H925L921.5 88.6L918.4 87.2Z" fill="#141414"/><path d="M921.2 93.3Q923.8 89.8 927 91.4Q930.2 89.8 932.8 93.3" fill="none" stroke="#16203a" stroke-width="1.3"/><rect x="925.8" y="96" width="2.4" height="3.6" fill="#2a2a2a"/><circle cx="921.8" cy="97" r="1" fill="#16203a"/><circle cx="932.2" cy="97" r="1" fill="#16203a"/><path d="M950 86.5H954.5M950 89.5H954.5M950 92.5H954.5" stroke="#cfccc7" stroke-width="1"/><rect x="959.6" y="78.2" width="21.0" height="22" rx="3.5" fill="url(#gbtnl)" stroke="#c4c0b9" stroke-width="1"/><path d="M967 89V85.5Q967 82.3 970.3 82.3Q973.6 82.3 973.6 85.5V89" fill="none" stroke="#1a8a6a" stroke-width="1.9"/><rect x="965.2" y="88.7" width="10.4" height="7.5" rx="0.8" fill="url(#ggreen)" stroke="#0a6a4a" stroke-width="0.6"/><path d="M965.5 91H975.3M965.5 93H975.3" stroke="#7ad8b8" stroke-width="0.5"/><rect x="984.9" y="78.2" width="21.899999999999977" height="22" rx="3.5" fill="url(#gbtn)" stroke="#c4c0b9" stroke-width="1"/><path d="M989 95.5L1002.5 82.5" stroke="#6e6e6e" stroke-width="3.4"/><path d="M989 95.5L1002.5 82.5" stroke="#8e8e8e" stroke-width="2.2"/><ellipse cx="996" cy="89" rx="3.6" ry="2.5" transform="rotate(-45 996 89)" fill="#8e8e8e" stroke="#6e6e6e" stroke-width="0.7"/><rect x="1010.5" y="78.2" width="21.5" height="22" rx="3.5" fill="url(#gbtn)" stroke="#c4c0b9" stroke-width="1"/><path d="M1021.7 82V94.5M1014 94.5H1029.5" stroke="#6e6e6e" stroke-width="3"/><path d="M1021.7 82V94.5M1014 94.5H1029.5" stroke="#8e8e8e" stroke-width="1.8"/><rect x="1035.8" y="78.2" width="21.90000000000009" height="22" rx="3.5" fill="url(#gbtn)" stroke="#c4c0b9" stroke-width="1"/><path d="M1042.5 82V96M1050 82V96M1039.5 85.5H1053M1039.5 92.5H1053" stroke="#6e6e6e" stroke-width="3"/><path d="M1042.5 82V96M1050 82V96M1039.5 85.5H1053M1039.5 92.5H1053" stroke="#8e8e8e" stroke-width="1.8"/><rect x="1061.9" y="78.2" width="21.0" height="22" rx="3.5" fill="url(#gbtn)" stroke="#c4c0b9" stroke-width="1"/><path d="M1066 83L1077.5 94.5M1077.5 83L1066 94.5" stroke="#6e6e6e" stroke-width="4"/><path d="M1066 83L1077.5 94.5M1077.5 83L1066 94.5" stroke="#8e8e8e" stroke-width="2.6"/><rect x="1086.7" y="78.2" width="21.899999999999864" height="22" rx="3.5" fill="url(#gbtn)" stroke="#c4c0b9" stroke-width="1"/><path d="M1091.5 85L1104 91.5M1091 89.5L1102.5 95.5" stroke="#6e6e6e" stroke-width="3"/><path d="M1091.5 85L1104 91.5M1091 89.5L1102.5 95.5" stroke="#8e8e8e" stroke-width="1.8"/><rect x="1112.8" y="78.2" width="21.100000000000136" height="22" rx="3.5" fill="url(#gbtn)" stroke="#c4c0b9" stroke-width="1"/><path d="M1119.5 92.5L1129.5 83.5" stroke="#6e6e6e" stroke-width="2.8"/><path d="M1119.5 92.5L1129.5 83.5" stroke="#8e8e8e" stroke-width="1.6"/><circle cx="1119.5" cy="93" r="2.6" fill="#8e8e8e" stroke="#6e6e6e" stroke-width="0.7"/><rect x="1138.1" y="78.2" width="21.90000000000009" height="22" rx="3.5" fill="url(#gbtn)" stroke="#c4c0b9" stroke-width="1"/><path d="M1149 83.5L1154 88.5L1149 93.5L1144 88.5Z" fill="none" stroke="#6e6e6e" stroke-width="2"/><circle cx="1149" cy="83.5" r="1.9" fill="#8e8e8e"/><circle cx="1154" cy="88.5" r="1.9" fill="#8e8e8e"/><circle cx="1149" cy="93.5" r="1.9" fill="#8e8e8e"/><circle cx="1144" cy="88.5" r="1.9" fill="#8e8e8e"/><path d="M1185 81.8L1188.2 84.8L1185 87.8M1189 81.8L1192.2 84.8L1189 87.8" fill="none" stroke="#111" stroke-width="1.7"/></svg>

<div class="btn" style="left:885px;top:119px;width:81px;height:23px"></div>
<svg class="a" style="left:896px;top:121px" width="18" height="20" viewBox="0 0 18 20"><path d="M5 2.5L15.5 1.5L14.5 16L3 17Z" fill="#45b5bd" stroke="#1f7078" stroke-width="1" stroke-dasharray="1.6,0.8"/><path d="M7.3 5.8L12.3 5.2L11.6 12.8L6.5 13.4Z" fill="#f4f4f4" stroke="#1a1a1a" stroke-width="1.1"/><path d="M4.5 18.5H6M13 17V19" stroke="#3a9aa0" stroke-width="0.8"/></svg>
<div class="btn" style="left:974px;top:119px;width:20px;height:23px"></div>
<svg class="a" style="left:976px;top:123px" width="17" height="14" viewBox="0 0 17 14"><path d="M2 10L7 6L9 8L14 3L15 6L10 11L8 9Z" fill="#2a9a9a" stroke="#1a6a6a" stroke-width="0.8"/><path d="M9 4L15 3L14 9Z" fill="#bfe6e0" stroke="#2a8a8a" stroke-width="0.8"/></svg>
<div class="btn" style="left:1002px;top:119px;width:19px;height:23px"></div>
<div class="a" style="left:1004px;top:123px;width:15px;height:15px;background:#000"></div>
<div class="btn" style="left:1029px;top:119px;width:20px;height:23px"></div>
<div class="a" style="left:1032px;top:123px;width:15px;height:15px;background:#c9c9c9"></div>
<div class="a" style="left:1057px;top:120.5px;width:46px;height:19px;border:1px solid #c9c5be;border-radius:3px;background:linear-gradient(90deg,#fff 0,#fff 30px,#f4f3f1 30px)"></div>
<div class="a" style="left:1087px;top:121px;width:1px;height:18px;background:#dcd9d4"></div>
<svg class="a" style="left:1091px;top:122px" width="9" height="16"><path d="M2 6L4.5 3L7 6Z M2 10L4.5 13L7 10Z" fill="#666"/></svg>
<div class="a" style="left:1112px;top:120.5px;width:46px;height:19px;border:1px solid #c9c5be;border-radius:3px;background:linear-gradient(90deg,#fff 0,#fff 30px,#f4f3f1 30px)"></div>
<div class="a" style="left:1142px;top:121px;width:1px;height:18px;background:#dcd9d4"></div>
<div class="a" style="left:1113px;top:121px;width:29px;height:18px;overflow:hidden"><div class="t" style="left:3.2px;top:2.6px;font-size:14.6px;color:#3c3c3c">0,20</div></div>
<svg class="a" style="left:1146px;top:122px" width="9" height="16"><path d="M2 6L4.5 3L7 6Z M2 10L4.5 13L7 10Z" fill="#666"/></svg>
<div class="btn" style="left:1167px;top:119px;width:19px;height:23px"></div>
<svg class="a" style="left:1169px;top:122px" width="16" height="17" viewBox="0 0 16 17"><rect x="2" y="2" width="3" height="4" fill="#e02020"/><rect x="2" y="6" width="3" height="4" fill="#e0d020"/><rect x="2" y="10" width="3" height="4" fill="#20b020"/><path d="M5 7H9V4L15 9L9 14V11H5Z" fill="#3a7ae0" stroke="#1a3a90" stroke-width="0.8"/></svg>

<div class="t" style="left:474.75px;top:42.99px;font-size:14.6px;font-weight:400;color:#3c3c3c;letter-spacing:0.562px;">Draft</div>
<div class="t" style="left:11.00px;top:123.44px;font-size:14.6px;font-weight:400;color:#3c3c3c;letter-spacing:0.050px;">active command:</div>
<div class="t" style="left:126.40px;top:123.44px;font-size:14.6px;font-weight:700;color:#3c3c3c;letter-spacing:0.333px;">None</div>
<div class="t" style="left:915.70px;top:123.24px;font-size:14.6px;font-weight:400;color:#3c3c3c;letter-spacing:0.433px;">None</div>
<div class="t" style="left:1061.30px;top:123.24px;font-size:14.6px;font-weight:400;color:#3c3c3c;letter-spacing:-0.050px;">2px</div>

<div class="a" style="left:364px;top:158px;width:832px;height:457px;background:linear-gradient(#333365 0%,#9495ab 100%)"></div>
<svg class="a" style="left:594px;top:152px" width="12" height="6"><g fill="#d6d4d0"><rect x="2" y="1" width="1.6" height="4"/><rect x="5.3" y="1" width="1.6" height="4"/><rect x="8.6" y="1" width="1.6" height="4"/></g></svg>

<svg style="position:absolute;left:0;top:0" width="1200" height="679" viewBox="0 0 1200 679">
<polygon points="740.82,300.90 779.95,323.50 779.95,278.50 740.82,255.90" fill="#8d8d8d"/>
<polygon points="779.95,323.50 819.08,301.00 819.08,256.00 779.95,278.50" fill="#6c6c6c"/>
<polygon points="740.82,255.90 779.95,278.50 819.08,256.00 779.95,233.40" fill="#949494"/>
<polygon points="740.82,300.90 779.95,323.50 819.08,301.00 819.08,256.00 779.95,233.40 740.82,255.90" fill="none" stroke="#161616" stroke-width="1.65" stroke-linejoin="miter"/>
<polyline points="740.82,255.90 779.95,278.50 819.08,256.00" fill="none" stroke="#161616" stroke-width="1.65"/>
<line x1="779.95" y1="278.50" x2="779.95" y2="323.50" stroke="#161616" stroke-width="1.65"/>
<polygon points="693.87,327.90 733.00,350.50 733.00,305.50 693.87,282.90" fill="#8d8d8d"/>
<polygon points="733.00,350.50 772.13,328.00 772.13,283.00 733.00,305.50" fill="#6c6c6c"/>
<polygon points="693.87,282.90 733.00,305.50 772.13,283.00 733.00,260.40" fill="#949494"/>
<polygon points="693.87,327.90 733.00,350.50 772.13,328.00 772.13,283.00 733.00,260.40 693.87,282.90" fill="none" stroke="#161616" stroke-width="1.65" stroke-linejoin="miter"/>
<polyline points="693.87,282.90 733.00,305.50 772.13,283.00" fill="none" stroke="#161616" stroke-width="1.65"/>
<line x1="733.00" y1="305.50" x2="733.00" y2="350.50" stroke="#161616" stroke-width="1.65"/>
<polygon points="787.78,328.02 826.91,350.62 826.91,305.62 787.78,283.02" fill="#8d8d8d"/>
<polygon points="826.91,350.62 866.04,328.12 866.04,283.12 826.91,305.62" fill="#6c6c6c"/>
<polygon points="787.78,283.02 826.91,305.62 866.04,283.12 826.91,260.52" fill="#949494"/>
<polygon points="787.78,328.02 826.91,350.62 866.04,328.12 866.04,283.12 826.91,260.52 787.78,283.02" fill="none" stroke="#161616" stroke-width="1.65" stroke-linejoin="miter"/>
<polyline points="787.78,283.02 826.91,305.62 866.04,283.12" fill="none" stroke="#161616" stroke-width="1.65"/>
<line x1="826.91" y1="305.62" x2="826.91" y2="350.62" stroke="#161616" stroke-width="1.65"/>
<polygon points="646.91,354.90 686.04,377.50 686.04,332.50 646.91,309.90" fill="#8d8d8d"/>
<polygon points="686.04,377.50 725.17,355.00 725.17,310.00 686.04,332.50" fill="#6c6c6c"/>
<polygon points="646.91,309.90 686.04,332.50 725.17,310.00 686.04,287.40" fill="#949494"/>
<polygon points="646.91,354.90 686.04,377.50 725.17,355.00 725.17,310.00 686.04,287.40 646.91,309.90" fill="none" stroke="#161616" stroke-width="1.65" stroke-linejoin="miter"/>
<polyline points="646.91,309.90 686.04,332.50 725.17,310.00" fill="none" stroke="#161616" stroke-width="1.65"/>
<line x1="686.04" y1="332.50" x2="686.04" y2="377.50" stroke="#161616" stroke-width="1.65"/>
<polygon points="740.82,355.02 779.95,377.62 779.95,332.62 740.82,310.02" fill="#8d8d8d"/>
<polygon points="779.95,377.62 819.08,355.12 819.08,310.12 779.95,332.62" fill="#6c6c6c"/>
<polygon points="740.82,310.02 779.95,332.62 819.08,310.12 779.95,287.52" fill="#949494"/>
<polygon points="740.82,355.02 779.95,377.62 819.08,355.12 819.08,310.12 779.95,287.52 740.82,310.02" fill="none" stroke="#161616" stroke-width="1.65" stroke-linejoin="miter"/>
<polyline points="740.82,310.02 779.95,332.62 819.08,310.12" fill="none" stroke="#161616" stroke-width="1.65"/>
<line x1="779.95" y1="332.62" x2="779.95" y2="377.62" stroke="#161616" stroke-width="1.65"/>
<polygon points="834.74,355.14 873.87,377.74 873.87,332.74 834.74,310.14" fill="#8d8d8d"/>
<polygon points="873.87,377.74 913.00,355.24 913.00,310.24 873.87,332.74" fill="#6c6c6c"/>
<polygon points="834.74,310.14 873.87,332.74 913.00,310.24 873.87,287.64" fill="#949494"/>
<polygon points="834.74,355.14 873.87,377.74 913.00,355.24 913.00,310.24 873.87,287.64 834.74,310.14" fill="none" stroke="#161616" stroke-width="1.65" stroke-linejoin="miter"/>
<polyline points="834.74,310.14 873.87,332.74 913.00,310.24" fill="none" stroke="#161616" stroke-width="1.65"/>
<line x1="873.87" y1="332.74" x2="873.87" y2="377.74" stroke="#161616" stroke-width="1.65"/>
<polygon points="599.96,381.90 639.09,404.50 639.09,359.50 599.96,336.90" fill="#8d8d8d"/>
<polygon points="639.09,404.50 678.22,382.00 678.22,337.00 639.09,359.50" fill="#6c6c6c"/>
<polygon points="599.96,336.90 639.09,359.50 678.22,337.00 639.09,314.40" fill="#949494"/>
<polygon points="599.96,381.90 639.09,404.50 678.22,382.00 678.22,337.00 639.09,314.40 599.96,336.90" fill="none" stroke="#161616" stroke-width="1.65" stroke-linejoin="miter"/>
<polyline points="599.96,336.90 639.09,359.50 678.22,337.00" fill="none" stroke="#161616" stroke-width="1.65"/>
<line x1="639.09" y1="359.50" x2="639.09" y2="404.50" stroke="#161616" stroke-width="1.65"/>
<polygon points="693.87,382.02 733.00,404.62 733.00,359.62 693.87,337.02" fill="#8d8d8d"/>
<polygon points="733.00,404.62 772.13,382.12 772.13,337.12 733.00,359.62" fill="#6c6c6c"/>
<polygon points="693.87,337.02 733.00,359.62 772.13,337.12 733.00,314.52" fill="#949494"/>
<polygon points="693.87,382.02 733.00,404.62 772.13,382.12 772.13,337.12 733.00,314.52 693.87,337.02" fill="none" stroke="#161616" stroke-width="1.65" stroke-linejoin="miter"/>
<polyline points="693.87,337.02 733.00,359.62 772.13,337.12" fill="none" stroke="#161616" stroke-width="1.65"/>
<line x1="733.00" y1="359.62" x2="733.00" y2="404.62" stroke="#161616" stroke-width="1.65"/>
<polygon points="787.78,382.14 826.91,404.74 826.91,359.74 787.78,337.14" fill="#8d8d8d"/>
<polygon points="826.91,404.74 866.04,382.24 866.04,337.24 826.91,359.74" fill="#6c6c6c"/>
<polygon points="787.78,337.14 826.91,359.74 866.04,337.24 826.91,314.64" fill="#949494"/>
<polygon points="787.78,382.14 826.91,404.74 866.04,382.24 866.04,337.24 826.91,314.64 787.78,337.14" fill="none" stroke="#161616" stroke-width="1.65" stroke-linejoin="miter"/>
<polyline points="787.78,337.14 826.91,359.74 866.04,337.24" fill="none" stroke="#161616" stroke-width="1.65"/>
<line x1="826.91" y1="359.74" x2="826.91" y2="404.74" stroke="#161616" stroke-width="1.65"/>
<polygon points="881.69,382.26 920.82,404.86 920.82,359.86 881.69,337.26" fill="#8d8d8d"/>
<polygon points="920.82,404.86 959.95,382.36 959.95,337.36 920.82,359.86" fill="#6c6c6c"/>
<polygon points="881.69,337.26 920.82,359.86 959.95,337.36 920.82,314.76" fill="#949494"/>
<polygon points="881.69,382.26 920.82,404.86 959.95,382.36 959.95,337.36 920.82,314.76 881.69,337.26" fill="none" stroke="#161616" stroke-width="1.65" stroke-linejoin="miter"/>
<polyline points="881.69,337.26 920.82,359.86 959.95,337.36" fill="none" stroke="#161616" stroke-width="1.65"/>
<line x1="920.82" y1="359.86" x2="920.82" y2="404.86" stroke="#161616" stroke-width="1.65"/>
<polygon points="553.00,408.90 592.13,431.50 592.13,386.50 553.00,363.90" fill="#8d8d8d"/>
<polygon points="592.13,431.50 631.26,409.00 631.26,364.00 592.13,386.50" fill="#6c6c6c"/>
<polygon points="553.00,363.90 592.13,386.50 631.26,364.00 592.13,341.40" fill="#949494"/>
<polygon points="553.00,408.90 592.13,431.50 631.26,409.00 631.26,364.00 592.13,341.40 553.00,363.90" fill="none" stroke="#161616" stroke-width="1.65" stroke-linejoin="miter"/>
<polyline points="553.00,363.90 592.13,386.50 631.26,364.00" fill="none" stroke="#161616" stroke-width="1.65"/>
<line x1="592.13" y1="386.50" x2="592.13" y2="431.50" stroke="#161616" stroke-width="1.65"/>
<polygon points="646.91,409.02 686.04,431.62 686.04,386.62 646.91,364.02" fill="#8d8d8d"/>
<polygon points="686.04,431.62 725.17,409.12 725.17,364.12 686.04,386.62" fill="#6c6c6c"/>
<polygon points="646.91,364.02 686.04,386.62 725.17,364.12 686.04,341.52" fill="#949494"/>
<polygon points="646.91,409.02 686.04,431.62 725.17,409.12 725.17,364.12 686.04,341.52 646.91,364.02" fill="none" stroke="#161616" stroke-width="1.65" stroke-linejoin="miter"/>
<polyline points="646.91,364.02 686.04,386.62 725.17,364.12" fill="none" stroke="#161616" stroke-width="1.65"/>
<line x1="686.04" y1="386.62" x2="686.04" y2="431.62" stroke="#161616" stroke-width="1.65"/>
<polygon points="740.82,409.14 779.95,431.74 779.95,386.74 740.82,364.14" fill="#8d8d8d"/>
<polygon points="779.95,431.74 819.08,409.24 819.08,364.24 779.95,386.74" fill="#6c6c6c"/>
<polygon points="740.82,364.14 779.95,386.74 819.08,364.24 779.95,341.64" fill="#949494"/>
<polygon points="740.82,409.14 779.95,431.74 819.08,409.24 819.08,364.24 779.95,341.64 740.82,364.14" fill="none" stroke="#161616" stroke-width="1.65" stroke-linejoin="miter"/>
<polyline points="740.82,364.14 779.95,386.74 819.08,364.24" fill="none" stroke="#161616" stroke-width="1.65"/>
<line x1="779.95" y1="386.74" x2="779.95" y2="431.74" stroke="#161616" stroke-width="1.65"/>
<polygon points="834.74,409.26 873.87,431.86 873.87,386.86 834.74,364.26" fill="#8d8d8d"/>
<polygon points="873.87,431.86 913.00,409.36 913.00,364.36 873.87,386.86" fill="#6c6c6c"/>
<polygon points="834.74,364.26 873.87,386.86 913.00,364.36 873.87,341.76" fill="#949494"/>
<polygon points="834.74,409.26 873.87,431.86 913.00,409.36 913.00,364.36 873.87,341.76 834.74,364.26" fill="none" stroke="#161616" stroke-width="1.65" stroke-linejoin="miter"/>
<polyline points="834.74,364.26 873.87,386.86 913.00,364.36" fill="none" stroke="#161616" stroke-width="1.65"/>
<line x1="873.87" y1="386.86" x2="873.87" y2="431.86" stroke="#161616" stroke-width="1.65"/>
<polygon points="928.65,409.38 967.78,431.98 967.78,386.98 928.65,364.38" fill="#8d8d8d"/>
<polygon points="967.78,431.98 1006.91,409.48 1006.91,364.48 967.78,386.98" fill="#6c6c6c"/>
<polygon points="928.65,364.38 967.78,386.98 1006.91,364.48 967.78,341.88" fill="#949494"/>
<polygon points="928.65,409.38 967.78,431.98 1006.91,409.48 1006.91,364.48 967.78,341.88 928.65,364.38" fill="none" stroke="#161616" stroke-width="1.65" stroke-linejoin="miter"/>
<polyline points="928.65,364.38 967.78,386.98 1006.91,364.48" fill="none" stroke="#161616" stroke-width="1.65"/>
<line x1="967.78" y1="386.98" x2="967.78" y2="431.98" stroke="#161616" stroke-width="1.65"/>
<polygon points="599.96,436.02 639.09,458.62 639.09,413.62 599.96,391.02" fill="#8d8d8d"/>
<polygon points="639.09,458.62 678.22,436.12 678.22,391.12 639.09,413.62" fill="#6c6c6c"/>
<polygon points="599.96,391.02 639.09,413.62 678.22,391.12 639.09,368.52" fill="#949494"/>
<polygon points="599.96,436.02 639.09,458.62 678.22,436.12 678.22,391.12 639.09,368.52 599.96,391.02" fill="none" stroke="#161616" stroke-width="1.65" stroke-linejoin="miter"/>
<polyline points="599.96,391.02 639.09,413.62 678.22,391.12" fill="none" stroke="#161616" stroke-width="1.65"/>
<line x1="639.09" y1="413.62" x2="639.09" y2="458.62" stroke="#161616" stroke-width="1.65"/>
<polygon points="693.87,436.14 733.00,458.74 733.00,413.74 693.87,391.14" fill="#8d8d8d"/>
<polygon points="733.00,458.74 772.13,436.24 772.13,391.24 733.00,413.74" fill="#6c6c6c"/>
<polygon points="693.87,391.14 733.00,413.74 772.13,391.24 733.00,368.64" fill="#949494"/>
<polygon points="693.87,436.14 733.00,458.74 772.13,436.24 772.13,391.24 733.00,368.64 693.87,391.14" fill="none" stroke="#161616" stroke-width="1.65" stroke-linejoin="miter"/>
<polyline points="693.87,391.14 733.00,413.74 772.13,391.24" fill="none" stroke="#161616" stroke-width="1.65"/>
<line x1="733.00" y1="413.74" x2="733.00" y2="458.74" stroke="#161616" stroke-width="1.65"/>
<polygon points="787.78,436.26 826.91,458.86 826.91,413.86 787.78,391.26" fill="#8d8d8d"/>
<polygon points="826.91,458.86 866.04,436.36 866.04,391.36 826.91,413.86" fill="#6c6c6c"/>
<polygon points="787.78,391.26 826.91,413.86 866.04,391.36 826.91,368.76" fill="#949494"/>
<polygon points="787.78,436.26 826.91,458.86 866.04,436.36 866.04,391.36 826.91,368.76 787.78,391.26" fill="none" stroke="#161616" stroke-width="1.65" stroke-linejoin="miter"/>
<polyline points="787.78,391.26 826.91,413.86 866.04,391.36" fill="none" stroke="#161616" stroke-width="1.65"/>
<line x1="826.91" y1="413.86" x2="826.91" y2="458.86" stroke="#161616" stroke-width="1.65"/>
<polygon points="881.69,436.38 920.82,458.98 920.82,413.98 881.69,391.38" fill="#8d8d8d"/>
<polygon points="920.82,458.98 959.95,436.48 959.95,391.48 920.82,413.98" fill="#6c6c6c"/>
<polygon points="881.69,391.38 920.82,413.98 959.95,391.48 920.82,368.88" fill="#949494"/>
<polygon points="881.69,436.38 920.82,458.98 959.95,436.48 959.95,391.48 920.82,368.88 881.69,391.38" fill="none" stroke="#161616" stroke-width="1.65" stroke-linejoin="miter"/>
<polyline points="881.69,391.38 920.82,413.98 959.95,391.48" fill="none" stroke="#161616" stroke-width="1.65"/>
<line x1="920.82" y1="413.98" x2="920.82" y2="458.98" stroke="#161616" stroke-width="1.65"/>
<polygon points="646.91,463.14 686.04,485.74 686.04,440.74 646.91,418.14" fill="#8d8d8d"/>
<polygon points="686.04,485.74 725.17,463.24 725.17,418.24 686.04,440.74" fill="#6c6c6c"/>
<polygon points="646.91,418.14 686.04,440.74 725.17,418.24 686.04,395.64" fill="#949494"/>
<polygon points="646.91,463.14 686.04,485.74 725.17,463.24 725.17,418.24 686.04,395.64 646.91,418.14" fill="none" stroke="#161616" stroke-width="1.65" stroke-linejoin="miter"/>
<polyline points="646.91,418.14 686.04,440.74 725.17,418.24" fill="none" stroke="#161616" stroke-width="1.65"/>
<line x1="686.04" y1="440.74" x2="686.04" y2="485.74" stroke="#161616" stroke-width="1.65"/>
<polygon points="740.82,463.26 779.95,485.86 779.95,440.86 740.82,418.26" fill="#8d8d8d"/>
<polygon points="779.95,485.86 819.08,463.36 819.08,418.36 779.95,440.86" fill="#6c6c6c"/>
<polygon points="740.82,418.26 779.95,440.86 819.08,418.36 779.95,395.76" fill="#949494"/>
<polygon points="740.82,463.26 779.95,485.86 819.08,463.36 819.08,418.36 779.95,395.76 740.82,418.26" fill="none" stroke="#161616" stroke-width="1.65" stroke-linejoin="miter"/>
<polyline points="740.82,418.26 779.95,440.86 819.08,418.36" fill="none" stroke="#161616" stroke-width="1.65"/>
<line x1="779.95" y1="440.86" x2="779.95" y2="485.86" stroke="#161616" stroke-width="1.65"/>
<polygon points="834.74,463.38 873.87,485.98 873.87,440.98 834.74,418.38" fill="#8d8d8d"/>
<polygon points="873.87,485.98 913.00,463.48 913.00,418.48 873.87,440.98" fill="#6c6c6c"/>
<polygon points="834.74,418.38 873.87,440.98 913.00,418.48 873.87,395.88" fill="#949494"/>
<polygon points="834.74,463.38 873.87,485.98 913.00,463.48 913.00,418.48 873.87,395.88 834.74,418.38" fill="none" stroke="#161616" stroke-width="1.65" stroke-linejoin="miter"/>
<polyline points="834.74,418.38 873.87,440.98 913.00,418.48" fill="none" stroke="#161616" stroke-width="1.65"/>
<line x1="873.87" y1="440.98" x2="873.87" y2="485.98" stroke="#161616" stroke-width="1.65"/>
<polygon points="693.87,490.26 733.00,512.86 733.00,467.86 693.87,445.26" fill="#8d8d8d"/>
<polygon points="733.00,512.86 772.13,490.36 772.13,445.36 733.00,467.86" fill="#6c6c6c"/>
<polygon points="693.87,445.26 733.00,467.86 772.13,445.36 733.00,422.76" fill="#949494"/>
<polygon points="693.87,490.26 733.00,512.86 772.13,490.36 772.13,445.36 733.00,422.76 693.87,445.26" fill="none" stroke="#161616" stroke-width="1.65" stroke-linejoin="miter"/>
<polyline points="693.87,445.26 733.00,467.86 772.13,445.36" fill="none" stroke="#161616" stroke-width="1.65"/>
<line x1="733.00" y1="467.86" x2="733.00" y2="512.86" stroke="#161616" stroke-width="1.65"/>
<polygon points="787.78,490.38 826.91,512.98 826.91,467.98 787.78,445.38" fill="#8d8d8d"/>
<polygon points="826.91,512.98 866.04,490.48 866.04,445.48 826.91,467.98" fill="#6c6c6c"/>
<polygon points="787.78,445.38 826.91,467.98 866.04,445.48 826.91,422.88" fill="#949494"/>
<polygon points="787.78,490.38 826.91,512.98 866.04,490.48 866.04,445.48 826.91,422.88 787.78,445.38" fill="none" stroke="#161616" stroke-width="1.65" stroke-linejoin="miter"/>
<polyline points="787.78,445.38 826.91,467.98 866.04,445.48" fill="none" stroke="#161616" stroke-width="1.65"/>
<line x1="826.91" y1="467.98" x2="826.91" y2="512.98" stroke="#161616" stroke-width="1.65"/>
<polygon points="740.82,517.38 779.95,539.98 779.95,494.98 740.82,472.38" fill="#8d8d8d"/>
<polygon points="779.95,539.98 819.08,517.48 819.08,472.48 779.95,494.98" fill="#6c6c6c"/>
<polygon points="740.82,472.38 779.95,494.98 819.08,472.48 779.95,449.88" fill="#949494"/>
<polygon points="740.82,517.38 779.95,539.98 819.08,517.48 819.08,472.48 779.95,449.88 740.82,472.38" fill="none" stroke="#161616" stroke-width="1.65" stroke-linejoin="miter"/>
<polyline points="740.82,472.38 779.95,494.98 819.08,472.48" fill="none" stroke="#161616" stroke-width="1.65"/>
<line x1="779.95" y1="494.98" x2="779.95" y2="539.98" stroke="#161616" stroke-width="1.65"/>
<line x1="553.00" y1="408.90" x2="553.00" y2="272" stroke="#24248a" stroke-width="1.9"/>
<path d="M553.00,261 L548.80,281.2 Q553.00,283 557.20,281.2 Z" fill="#232a80"/>
<line x1="553.00" y1="408.90" x2="666.48" y2="474.44" stroke="#a42020" stroke-width="2.1"/>
<polygon points="684.09,484.61 659.40,474.05 662.28,469.06" fill="#8e2222"/>
</svg>

<svg class="a" style="left:1160px;top:568px" width="36" height="40" viewBox="1160 568 36 40">
<line x1="1173.6" y1="592.3" x2="1173.6" y2="577" stroke="#1a1aa0" stroke-width="1.6"/>
<line x1="1173.6" y1="592.3" x2="1183" y2="587.3" stroke="#1c8a1c" stroke-width="1.6"/>
<line x1="1173.6" y1="592.3" x2="1185.6" y2="599.8" stroke="#8a1a1a" stroke-width="1.6"/>
<text x="1176.3" y="577.6" font-family="Liberation Sans" font-size="9" fill="#111">Z</text>
<text x="1184.8" y="587.3" font-family="Liberation Sans" font-size="8.5" fill="#111">Y</text>
<text x="1188.3" y="600.4" font-family="Liberation Sans" font-size="9" fill="#111">X</text>
</svg>

<div class="t" style="left:4.70px;top:163.44px;font-size:14.6px;font-weight:400;color:#3c3c3c;letter-spacing:-0.111px;">Combo View</div>
<div class="a" style="left:328px;top:165px;width:11px;height:11px;border:1px solid #8a8a8a;border-radius:2px"></div>
<svg class="a" style="left:328px;top:165px" width="11" height="11"><rect x="2.5" y="4.5" width="4" height="4" fill="none" stroke="#555" stroke-width="1"/><rect x="4.5" y="2.5" width="4" height="4" fill="none" stroke="#555" stroke-width="1"/></svg>
<div class="a" style="left:344px;top:165px;width:11px;height:11px;border:1px solid #8a8a8a;border-radius:2px"></div>
<svg class="a" style="left:344px;top:165px" width="11" height="11"><path d="M2.5 2.5L8.5 8.5M8.5 2.5L2.5 8.5" stroke="#444" stroke-width="2"/></svg>
<div class="a" style="left:3px;top:211px;width:355px;height:436px;border:1px solid #c4c0b9;border-radius:0 3px 3px 3px;background:#f2f1f0"></div>
<div class="a" style="left:66px;top:185px;width:50px;height:27px;border:1px solid #c4c0b9;border-bottom:none;border-radius:3px 3px 0 0;background:linear-gradient(#eeedeb,#dedcd8)"></div>
<div class="a" style="left:3px;top:182px;width:63px;height:30px;border:1px solid #c4c0b9;border-bottom:none;border-radius:3px 3px 0 0;background:#f5f4f3"></div>
<div class="t" style="left:10.20px;top:189.74px;font-size:14.6px;font-weight:400;color:#3c3c3c;letter-spacing:0.417px;">Project</div>
<div class="t" style="left:73.50px;top:190.94px;font-size:14.6px;font-weight:400;color:#3c3c3c;letter-spacing:-0.625px;">Tasks</div>
<div class="a" style="left:5px;top:213px;width:351px;height:196px;border:1px solid #bdb9b2;background:#fff"></div>
<div class="a" style="left:6px;top:214px;width:349px;height:24px;background:linear-gradient(#fbfbfa,#eeedeb);border-bottom:1px solid #c9c5be"></div>
<div class="t" style="left:9.50px;top:219.44px;font-size:14.6px;font-weight:400;color:#3c3c3c;letter-spacing:0.228px;">Labels &amp; Attributes</div>
<div class="a" style="left:6px;top:350.5px;width:349px;height:18px;background:#e6e5e3"></div>
<div class="t" style="left:9.00px;top:241.04px;font-size:14.6px;font-weight:400;color:#3c3c3c;letter-spacing:0.250px;">Application</div>
<div class="t" style="left:49.50px;top:259.24px;font-size:14.6px;font-weight:700;color:#3c3c3c;letter-spacing:-0.333px;">Unnamed</div>
<div class="t" style="left:69.00px;top:277.84px;font-size:14.6px;font-weight:400;color:#b9b9b9;letter-spacing:0.156px;">master_box</div>
<div class="t" style="left:69.00px;top:296.44px;font-size:14.6px;font-weight:400;color:#b9b9b9;letter-spacing:-0.443px;">Pieza_1D</div>
<div class="t" style="left:88.70px;top:314.99px;font-size:14.6px;font-weight:400;color:#b9b9b9;letter-spacing:-0.500px;">base_1D</div>
<div class="t" style="left:89.70px;top:333.54px;font-size:14.6px;font-weight:400;color:#b9b9b9;letter-spacing:-0.250px;">Array</div>
<div class="t" style="left:70.00px;top:352.14px;font-size:14.6px;font-weight:700;color:#202020;letter-spacing:-0.143px;">Array_2D</div>
<svg class="a" style="left:13px;top:262px" width="10" height="8"><path d="M1 1H8L4.5 6Z" fill="#555"/></svg>
<svg class="a" style="left:33px;top:299px" width="10" height="8"><path d="M1 1H8L4.5 6Z" fill="#555"/></svg>
<svg class="a" style="left:30px;top:257px" width="14" height="18" viewBox="0 0 14 18"><path d="M1.5 1.5H9.5L12.5 4.5V16.5H1.5Z" fill="#fff" stroke="#1a1a1a" stroke-width="1.3"/><path d="M9.5 1.5V4.5H12.5" fill="none" stroke="#1a1a1a" stroke-width="0.9"/><path d="M3.2 4H8M3.2 6H10.5M3.2 8H10.5" stroke="#222" stroke-width="0.9"/><path d="M6 10.5A3 3 0 0 0 6 15.5Z" fill="#40c8d8"/><path d="M5 10.5A3 3 0 0 0 5 15.5" fill="none" stroke="#222" stroke-width="0.6"/><rect x="6.5" y="11.5" width="4.5" height="3" fill="#b050e0"/><path d="M6 10.5H11.5V15.5H6" fill="none" stroke="#111" stroke-width="0.8"/></svg>
<svg class="a" style="left:47.5px;top:277px" width="17" height="16" viewBox="0 0 17 16"><g opacity="0.62"><path d="M8 1.5H15.5V8.5H8Z" fill="#b4b4b4" stroke="#555" stroke-width="1"/><path d="M11 3V7M13 3V7M11 5H13" stroke="#444" stroke-width="0.8"/><path d="M1 8.5L4 5.5H9.5L10 6V12.5L7.5 15H1Z" fill="#c8c8c8" stroke="#555" stroke-width="1"/><path d="M1 8.5H7.5V15M7.5 8.5L10 6" fill="none" stroke="#555" stroke-width="0.9"/><path d="M4.5 5.8L8.5 2.5" stroke="#fff" stroke-width="1.2"/></g></svg>
<svg class="a" style="left:67px;top:314.5px" width="17" height="16" viewBox="0 0 17 16"><g opacity="0.62"><path d="M8 1.5H15.5V8.5H8Z" fill="#b4b4b4" stroke="#555" stroke-width="1"/><path d="M11 3V7M13 3V7M11 5H13" stroke="#444" stroke-width="0.8"/><path d="M1 8.5L4 5.5H9.5L10 6V12.5L7.5 15H1Z" fill="#c8c8c8" stroke="#555" stroke-width="1"/><path d="M1 8.5H7.5V15M7.5 8.5L10 6" fill="none" stroke="#555" stroke-width="0.9"/><path d="M4.5 5.8L8.5 2.5" stroke="#fff" stroke-width="1.2"/></g></svg>
<svg class="a" style="left:48px;top:295px" width="17" height="17" viewBox="0 0 17 17"><g opacity="0.7"><circle cx="6.5" cy="10" r="5.5" fill="#8a8a8a"/><circle cx="6" cy="9" r="4" fill="#b0b0b0"/><circle cx="10.5" cy="5.5" r="4.5" fill="#fafafa" stroke="#777" stroke-width="0.9"/><path d="M9 15.5H13" stroke="#aaa" stroke-width="1"/></g></svg>
<svg class="a" style="left:68.5px;top:334px" width="14" height="14" viewBox="0 0 14 14"><g opacity="0.75"><path d="M1 4L4 1H12.5V9.5L9.5 12.5H1Z" fill="#6a6a6a" stroke="#555" stroke-width="0.8"/><path d="M1 4H9.5V12.5H1Z" fill="#8c8c8c"/><path d="M1 4L4 1H12.5L9.5 4Z" fill="#a4a4a4"/><path d="M1 4H9.5V12.5M9.5 4L12.5 1" fill="none" stroke="#555" stroke-width="0.8"/></g></svg>
<svg class="a" style="left:49px;top:352.5px" width="14" height="14" viewBox="0 0 14 14"><path d="M1 4L4 1H12.5V9.5L9.5 12.5H1Z" fill="#2c2cb0" stroke="#5a1a20" stroke-width="0.9"/><path d="M1.4 4.2H9.3V12.2H1.4Z" fill="#4646d8"/><path d="M1 4H9.5V12.5M9.5 4L12.5 1" fill="none" stroke="#5a1a20" stroke-width="0.9"/></svg>
<div class="a" style="left:176.5px;top:410px;width:8px;height:4px;border-left:1.5px solid #d6d4d0;border-right:1.5px solid #d6d4d0"></div><div class="a" style="left:180px;top:410px;width:1.5px;height:4px;background:#d6d4d0"></div>
<div class="a" style="left:6px;top:415px;width:350px;height:202px;border:1px solid #c4c0b9;border-radius:3px"></div>
<div class="a" style="left:7px;top:417px;width:331px;height:198px;background:#fff;border-top:1px solid #c9c5be;border-right:1px solid #c9c5be;border-bottom:1px solid #c9c5be"></div>
<div class="a" style="left:7px;top:418px;width:330px;height:24px;background:linear-gradient(#fbfbfa,#eeedeb);border-bottom:1px solid #c9c5be"></div>
<div class="a" style="left:105px;top:418px;width:1px;height:196px;background:#d5d2cd"></div>
<div class="t" style="left:11.20px;top:423.94px;font-size:14.6px;font-weight:400;color:#3c3c3c;letter-spacing:0.443px;">Property</div>
<div class="t" style="left:110.10px;top:423.94px;font-size:14.6px;font-weight:400;color:#3c3c3c;letter-spacing:0.000px;">Value</div>
<div class="a" style="left:7px;top:442px;width:330px;height:172px;overflow:hidden">
<div class="a" style="left:40px;top:18.66px;width:290px;height:1px;background:#dddad6"></div>
<div class="t" style="left:43.00px;top:4.04px;font-size:14.6px;font-weight:400;color:#3c3c3c;letter-spacing:0.000px;">x</div>
<div class="t" style="left:102.40px;top:4.04px;font-size:14.6px;font-weight:400;color:#3c3c3c;letter-spacing:-0.500px;">0,00</div>
<div class="a" style="left:1px;top:19.66px;width:329px;height:19.66px;background:#efeeed"></div>
<div class="a" style="left:40px;top:38.32px;width:290px;height:1px;background:#dddad6"></div>
<div class="t" style="left:43.00px;top:23.70px;font-size:14.6px;font-weight:400;color:#3c3c3c;letter-spacing:0.000px;">y</div>
<div class="t" style="left:102.10px;top:23.70px;font-size:14.6px;font-weight:400;color:#3c3c3c;letter-spacing:-0.300px;">12,00</div>
<div class="a" style="left:40px;top:57.98px;width:290px;height:1px;background:#dddad6"></div>
<div class="t" style="left:42.00px;top:43.36px;font-size:14.6px;font-weight:400;color:#3c3c3c;letter-spacing:0.000px;">z</div>
<div class="t" style="left:102.40px;top:43.36px;font-size:14.6px;font-weight:400;color:#3c3c3c;letter-spacing:-0.500px;">0,00</div>
<div class="a" style="left:1px;top:58.98px;width:329px;height:19.66px;background:#efeeed"></div>
<div class="a" style="left:20px;top:77.64px;width:310px;height:1px;background:#dddad6"></div>
<div class="t" style="left:22.50px;top:63.02px;font-size:14.6px;font-weight:400;color:#3c3c3c;letter-spacing:0.089px;">Interval Z</div>
<div class="t" style="left:101.00px;top:63.02px;font-size:14.6px;font-weight:400;color:#3c3c3c;letter-spacing:-0.080px;">[0,00 0,00 1,00]</div>
<div class="a" style="left:20px;top:97.30px;width:310px;height:1px;background:#dddad6"></div>
<div class="t" style="left:22.80px;top:82.68px;font-size:14.6px;font-weight:400;color:#3c3c3c;letter-spacing:0.050px;">Label</div>
<div class="t" style="left:102.00px;top:82.68px;font-size:14.6px;font-weight:400;color:#3c3c3c;letter-spacing:-0.114px;">Array_2D</div>
<div class="a" style="left:1px;top:98.30px;width:329px;height:19.66px;background:#efeeed"></div>
<div class="a" style="left:20px;top:116.96px;width:310px;height:1px;background:#dddad6"></div>
<div class="t" style="left:22.80px;top:102.34px;font-size:14.6px;font-weight:400;color:#3c3c3c;letter-spacing:0.389px;">Number ...</div>
<div class="t" style="left:102.00px;top:102.34px;font-size:14.6px;font-weight:400;color:#3c3c3c;letter-spacing:0.000px;">1</div>
<div class="a" style="left:20px;top:136.62px;width:310px;height:1px;background:#dddad6"></div>
<div class="t" style="left:22.80px;top:122.00px;font-size:14.6px;font-weight:400;color:#3c3c3c;letter-spacing:0.029px;">Number X</div>
<div class="t" style="left:101.60px;top:122.00px;font-size:14.6px;font-weight:400;color:#3c3c3c;letter-spacing:0.000px;">5</div>
<div class="a" style="left:1px;top:137.62px;width:97px;height:19.66px;background:#f07746"></div>
<div class="a" style="left:101.5px;top:138.82px;width:212px;height:17.06px;background:#fff"></div>
<div class="a" style="left:313.5px;top:138.82px;width:16.5px;height:17.06px;background:#f1f0ee"></div>
<div class="a" style="left:20px;top:156.28px;width:310px;height:1px;background:#dddad6"></div>
<div class="t" style="left:22.80px;top:141.66px;font-size:14.6px;font-weight:400;color:#ffffff;letter-spacing:0.029px;">Number Y</div>
<div class="t" style="left:101.60px;top:141.66px;font-size:14.6px;font-weight:400;color:#3c3c3c;letter-spacing:0.000px;">5</div>
<div class="a" style="left:20px;top:175.94px;width:310px;height:1px;background:#dddad6"></div>
<div class="t" style="left:22.80px;top:161.32px;font-size:14.6px;font-weight:400;color:#3c3c3c;letter-spacing:0.100px;">Number Z</div>
<div class="t" style="left:102.00px;top:161.32px;font-size:14.6px;font-weight:400;color:#3c3c3c;letter-spacing:0.000px;">1</div>
<div class="a" style="left:98px;top:0;width:1px;height:172px;background:#d5d2cd"></div>
<svg class="a" style="left:10px;top:64px" width="8" height="10"><path d="M1 1.5V8.5L5.5 5Z" fill="#555"/></svg>
<svg class="a" style="left:317.5px;top:140px" width="9" height="16"><path d="M2.2 5L4.5 2.3L6.8 5Z M2.2 10L4.5 12.7L6.8 10Z" fill="#666"/></svg>
</div>
<div class="a" style="left:341px;top:417px;width:13px;height:198px;border:1px solid #cfcbc5;border-radius:7px;background:linear-gradient(90deg,#dcdad6,#e6e4e1)"></div>
<div class="a" style="left:341px;top:516px;width:13px;height:69px;border:1px solid #bdb9b2;border-radius:7px;background:linear-gradient(90deg,#fdfdfd,#efeeec)"></div>
<svg class="a" style="left:343px;top:420px" width="9" height="8"><path d="M2 6L4.5 3L7 6Z" fill="#555"/></svg>
<svg class="a" style="left:343px;top:603px" width="9" height="8"><path d="M2 2L4.5 5L7 2Z" fill="#555"/></svg>
<svg class="a" style="left:344px;top:545px" width="8" height="9"><path d="M1 1.5H6M1 4.5H6M1 7.5H6" stroke="#9a9a9a" stroke-width="1"/></svg>
<svg class="a" style="left:3px;top:612px" width="110" height="36" viewBox="3 612 110 36"><path d="M5 617 L15 640 Q17 644 20 644 L41 644 Q44 644 45 640 L52.5 617Z" fill="#eeedeb" stroke="#606060" stroke-width="1.1"/><path d="M53.5 617 L63 640 Q65 644.5 68 644.5 L88 644.5 Q91 644.5 92.5 640 L99.5 617Z" fill="#fff" stroke="#606060" stroke-width="1.1"/><path d="M5 617H110" stroke="#c4c0b9" stroke-width="1"/></svg>
<div class="t" style="left:13.70px;top:622.54px;font-size:14.6px;font-weight:400;color:#3c3c3c;letter-spacing:0.033px;">View</div>
<div class="t" style="left:61.30px;top:622.54px;font-size:14.6px;font-weight:400;color:#3c3c3c;letter-spacing:-0.300px;">Data</div>
<div class="a" style="left:364px;top:615px;width:832px;height:32px;background:#f2f1f0"></div>
<div class="a" style="left:358px;top:647px;width:838px;height:1px;background:#dcd9d4"></div>
<div class="a" style="left:364.7px;top:615px;width:107.9px;height:29px;border:1px solid #c9c5be;border-top:none;border-radius:0 0 3px 3px;background:linear-gradient(#dcdad6,#eceae8 45%,#f0efed)"></div>
<div class="t" style="left:371.80px;top:623.64px;font-size:14.6px;font-weight:400;color:#3c3c3c;letter-spacing:0.100px;">Start page</div>
<svg class="a" style="left:448.5px;top:624.5px" width="13" height="13" viewBox="0 0 13 13"><path d="M3 3L10 10M10 3L3 10" stroke="#5a5a5a" stroke-width="3.2" stroke-linecap="round"/></svg>
<div class="a" style="left:472.6px;top:615px;width:151.8px;height:32px;border:1px solid #c4c0b9;border-top:none;border-radius:0 0 3px 3px;background:#f9f9f8"></div>
<div class="t" style="left:501.80px;top:623.64px;font-size:14.6px;font-weight:400;color:#3c3c3c;letter-spacing:-0.082px;">Unnamed : 1*</div>
<svg class="a" style="left:479.1px;top:622px" width="17" height="16" viewBox="0 0 17 16"><path d="M0.5 0.5H7V3H3V6H6V8.5H3V13.5H0.5Z" fill="#e0340e"/><circle cx="10" cy="9" r="3.6" fill="#1c2aa0"/><path d="M10 4.2V13.8M5.2 9H14.8M6.6 5.6L13.4 12.4M13.4 5.6L6.6 12.4" stroke="#1c2aa0" stroke-width="1.7"/><circle cx="10" cy="9" r="1.3" fill="#fff"/></svg>
<svg class="a" style="left:601.0px;top:624.5px" width="13" height="13" viewBox="0 0 13 13"><path d="M3 3L10 10M10 3L3 10" stroke="#5a5a5a" stroke-width="3.2" stroke-linecap="round"/></svg>
<div class="a" style="left:624.4px;top:615px;width:188.9px;height:29px;border:1px solid #c9c5be;border-top:none;border-radius:0 0 3px 3px;background:linear-gradient(#dcdad6,#eceae8 45%,#f0efed)"></div>
<div class="t" style="left:655.30px;top:623.64px;font-size:14.6px;font-weight:400;color:#3c3c3c;letter-spacing:-0.020px;">Dependency graph</div>
<svg class="a" style="left:632.5px;top:622px" width="17" height="16" viewBox="0 0 17 16"><path d="M0.5 0.5H7V3H3V6H6V8.5H3V13.5H0.5Z" fill="#e0340e"/><circle cx="10" cy="9" r="3.6" fill="#1c2aa0"/><path d="M10 4.2V13.8M5.2 9H14.8M6.6 5.6L13.4 12.4M13.4 5.6L6.6 12.4" stroke="#1c2aa0" stroke-width="1.7"/><circle cx="10" cy="9" r="1.3" fill="#fff"/></svg>
<svg class="a" style="left:789.5px;top:624.5px" width="13" height="13" viewBox="0 0 13 13"><path d="M3 3L10 10M10 3L3 10" stroke="#5a5a5a" stroke-width="3.2" stroke-linecap="round"/></svg>
<div class="a" style="left:813.3px;top:615px;width:188.6px;height:29px;border:1px solid #c9c5be;border-top:none;border-radius:0 0 3px 3px;background:linear-gradient(#dcdad6,#eceae8 45%,#f0efed)"></div>
<div class="t" style="left:843.20px;top:623.64px;font-size:14.6px;font-weight:400;color:#3c3c3c;letter-spacing:-0.007px;">Dependency graph</div>
<svg class="a" style="left:820px;top:622px" width="17" height="16" viewBox="0 0 17 16"><path d="M0.5 0.5H7V3H3V6H6V8.5H3V13.5H0.5Z" fill="#e0340e"/><circle cx="10" cy="9" r="3.6" fill="#1c2aa0"/><path d="M10 4.2V13.8M5.2 9H14.8M6.6 5.6L13.4 12.4M13.4 5.6L6.6 12.4" stroke="#1c2aa0" stroke-width="1.7"/><circle cx="10" cy="9" r="1.3" fill="#fff"/></svg>
<svg class="a" style="left:977.5px;top:624.5px" width="13" height="13" viewBox="0 0 13 13"><path d="M3 3L10 10M10 3L3 10" stroke="#5a5a5a" stroke-width="3.2" stroke-linecap="round"/></svg>
<div class="t" style="left:1050.30px;top:655.94px;font-size:14.6px;font-weight:400;color:#3c3c3c;letter-spacing:-0.188px;">150.37 x 82.63 mm</div>
<svg class="a" style="left:1183.6px;top:662px" width="13" height="14"><g fill="#c4c1bc"><rect x="10.0" y="2.4" width="1.6" height="1.6"/><rect x="10.0" y="5.4" width="1.6" height="1.6"/><rect x="7.0" y="5.4" width="1.6" height="1.6"/><rect x="10.0" y="8.4" width="1.6" height="1.6"/><rect x="7.0" y="8.4" width="1.6" height="1.6"/><rect x="3.9" y="8.4" width="1.6" height="1.6"/><rect x="10.0" y="11.4" width="1.6" height="1.6"/><rect x="7.0" y="11.4" width="1.6" height="1.6"/><rect x="3.9" y="11.4" width="1.6" height="1.6"/><rect x="0.8" y="11.4" width="1.6" height="1.6"/></g></svg>
</body></html>
